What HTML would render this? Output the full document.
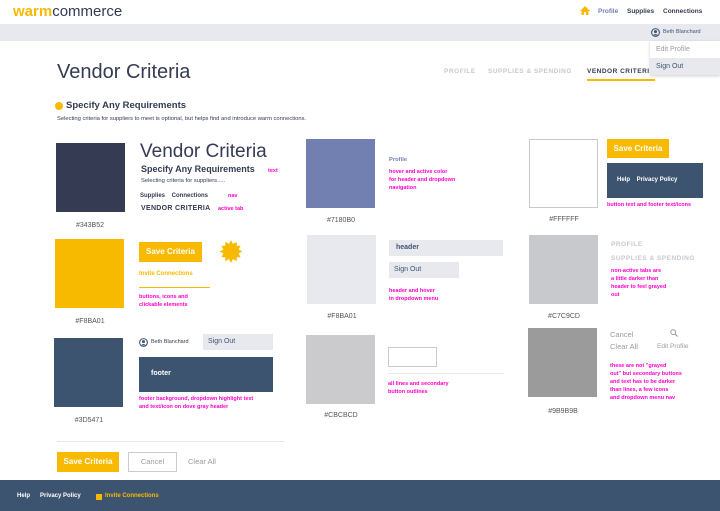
<!DOCTYPE html>
<html><head><style>
*{margin:0;padding:0;box-sizing:border-box}
body{width:720px;height:511px;position:relative;background:#fff;font-family:"Liberation Sans",sans-serif;overflow:hidden;color:#343B52}
.a{position:absolute;white-space:nowrap}
.b{font-weight:bold}
.pk{color:#ff00cc;font-weight:bold;font-size:5.5px;line-height:8px}
.lbl{font-size:7px;color:#555;width:70px;text-align:center}
.sw{position:absolute;width:69px;height:69px}
.btn{position:absolute;background:#F8BA01;color:#fff;font-size:8px;font-weight:bold;text-align:center}
</style></head><body>
<div class="a" style="left:13px;top:3px;font-size:15px;color:#343B52"><span style="color:#F8BA01;font-weight:bold">warm</span>commerce</div>
<svg class="a" style="left:580px;top:6px" width="10" height="9" viewBox="0 0 10 9"><path d="M5 0L0 5h1.5v4h2.5v-3h2v3h2.5v-4H10z" fill="#F8BA01"/></svg>
<div class="a b" style="left:598px;top:8px;font-size:6.5px;color:#7180B0">Profile</div>
<div class="a b" style="left:627px;top:8px;font-size:6.5px">Supplies</div>
<div class="a b" style="left:663px;top:8px;font-size:6.5px">Connections</div>
<div class="a" style="left:0;top:24px;width:720px;height:17px;background:#E8E9EE"></div>
<svg class="a" style="left:651px;top:28px" width="9" height="9" viewBox="0 0 10 10"><circle cx="5" cy="5" r="4.3" fill="none" stroke="#3D5471" stroke-width="1.2"/><circle cx="5" cy="4" r="1.7" fill="#3D5471"/><path d="M2 8.2Q5 5 8 8.2" fill="#3D5471"/></svg>
<div class="a" style="left:663px;top:29px;font-size:5.5px;color:#3D5471">Beth Blanchard</div>
<div class="a" style="left:650px;top:41px;width:70px;height:34px;background:#fff;box-shadow:0 1px 3px rgba(0,0,0,.2)"></div>
<div class="a" style="left:656px;top:46px;font-size:7px;color:#9B9B9B">Edit Profile</div>
<div class="a" style="left:650px;top:58px;width:70px;height:17px;background:#E8E9EE"></div>
<div class="a" style="left:656px;top:63px;font-size:7px;color:#3D5471">Sign Out</div>
<div class="a" style="left:57px;top:61px;font-size:20px;font-weight:300;color:#343B52">Vendor Criteria</div>
<div class="a b" style="left:444px;top:68px;font-size:6.5px;color:#C7C9CD;letter-spacing:.5px">PROFILE</div>
<div class="a b" style="left:488px;top:68px;font-size:6.5px;color:#C7C9CD;letter-spacing:.5px">SUPPLIES &amp; SPENDING</div>
<div class="a b" style="left:587px;top:68px;font-size:6.5px;color:#343B52;letter-spacing:.5px;width:63px;overflow:hidden">VENDOR CRITERIA</div>
<div class="a" style="left:587px;top:79px;width:68px;height:2px;background:#F8BA01"></div>
<div class="a" style="left:55px;top:102px;width:8px;height:8px;border-radius:50%;background:#F8BA01"></div>
<div class="a" style="left:66px;top:100px;font-size:9.5px;font-weight:bold">Specify Any Requirements</div>
<div class="a" style="left:57px;top:116px;font-size:5.8px;color:#343B52">Selecting criteria for suppliers to meet is optional, but helps find and introduce warm connections.</div>

<!-- col1 -->
<div class="sw" style="left:56px;top:143px;background:#343B52"></div>
<div class="a lbl" style="left:55px;top:222px">#343B52</div>
<div class="a" style="left:140px;top:141px;font-size:19px;font-weight:300">Vendor Criteria</div>
<div class="a" style="left:141px;top:164px;font-size:9px;font-weight:bold">Specify Any Requirements</div>
<div class="a" style="left:141px;top:178px;font-size:5.8px">Selecting criteria for suppliers.....</div>
<div class="a b" style="left:140px;top:193px;font-size:6px">Supplies &nbsp;&nbsp; Connections</div>
<div class="a b" style="left:141px;top:205px;font-size:7px;letter-spacing:.3px">VENDOR CRITERIA</div>
<div class="a pk" style="left:268px;top:167px">text</div>
<div class="a pk" style="left:228px;top:192px">nav</div>
<div class="a pk" style="left:218px;top:205px">active tab</div>
<div class="sw" style="left:55px;top:239px;background:#F8BA01"></div>
<div class="a lbl" style="left:55px;top:318px">#F8BA01</div>
<div class="btn" style="left:139px;top:242px;width:63px;height:20px;line-height:20px">Save Criteria</div>
<svg class="a" style="left:219px;top:240px" width="24" height="23" viewBox="0 0 24 24"><polygon fill="#F8BA01" points="12,0 14,4 18,2 18,6 22,6 20,10 24,12 20,14 22,18 18,18 18,22 14,20 12,24 10,20 6,22 6,18 2,18 4,14 0,12 4,10 2,6 6,6 6,2 10,4"/></svg>
<div class="a b" style="left:139px;top:271px;font-size:6px;color:#F8BA01">Invite Connections</div>
<div class="a" style="left:139px;top:287px;width:71px;height:1px;background:#F8BA01"></div>
<div class="a pk" style="left:139px;top:293px">buttons, icons and<br>clickable elements</div>
<div class="sw" style="left:54px;top:338px;background:#3D5471"></div>
<div class="a lbl" style="left:54px;top:417px">#3D5471</div>
<svg class="a" style="left:139px;top:338px" width="9" height="9" viewBox="0 0 10 10"><circle cx="5" cy="5" r="4.3" fill="none" stroke="#3D5471" stroke-width="1.2"/><circle cx="5" cy="4" r="1.7" fill="#3D5471"/><path d="M2 8.2Q5 5 8 8.2" fill="#3D5471"/></svg>
<div class="a" style="left:151px;top:339px;font-size:5.5px">Beth Blanchard</div>
<div class="a" style="left:203px;top:334px;width:70px;height:16px;background:#E8E9EE;font-size:7px;color:#3D5471;padding:4px 0 0 5px">Sign Out</div>
<div class="a b" style="left:139px;top:357px;width:134px;height:35px;background:#3D5471;color:#fff;font-size:7px;padding:13px 0 0 12px">footer</div>
<div class="a pk" style="left:139px;top:395px">footer background, dropdown highlight text<br>and text/icon on dove gray header</div>

<!-- col2 -->
<div class="sw" style="left:306px;top:139px;background:#7180B0"></div>
<div class="a lbl" style="left:306px;top:217px">#7180B0</div>
<div class="a b" style="left:389px;top:157px;font-size:5.8px;color:#7180B0">Profile</div>
<div class="a pk" style="left:389px;top:168px">hover and active color<br>for header and dropdown<br>navigation</div>
<div class="sw" style="left:307px;top:235px;background:#E8E9EE"></div>
<div class="a lbl" style="left:307px;top:313px">#F8BA01</div>
<div class="a b" style="left:389px;top:240px;width:114px;height:16px;background:#E8E9EE;font-size:7px;color:#3D5471;padding:4px 0 0 7px">header</div>
<div class="a" style="left:389px;top:262px;width:70px;height:16px;background:#E8E9EE;font-size:7px;color:#3D5471;padding:4px 0 0 5px">Sign Out</div>
<div class="a pk" style="left:389px;top:287px">header and hover<br>in dropdown menu</div>
<div class="sw" style="left:306px;top:335px;background:#CBCBCD"></div>
<div class="a lbl" style="left:306px;top:412px">#CBCBCD</div>
<div class="a" style="left:388px;top:347px;width:49px;height:20px;border:1px solid #CBCBCD"></div>
<div class="a" style="left:388px;top:373px;width:116px;height:1px;background:#e6e6e8"></div>
<div class="a pk" style="left:388px;top:380px">all lines and secondary<br>button outlines</div>

<!-- col3 -->
<div class="sw" style="left:529px;top:139px;border:1px solid #C7C9CD"></div>
<div class="a lbl" style="left:529px;top:216px">#FFFFFF</div>
<div class="btn" style="left:607px;top:139px;width:62px;height:19px;line-height:19px">Save Criteria</div>
<div class="a b" style="left:607px;top:163px;width:96px;height:35px;background:#3D5471;color:#fff;font-size:6px;padding:14px 0 0 10px">Help &nbsp;&nbsp;&nbsp;Privacy Policy</div>
<div class="a pk" style="left:607px;top:201px">button text and footer text/icons</div>
<div class="sw" style="left:529px;top:235px;background:#C7C9CD"></div>
<div class="a lbl" style="left:529px;top:313px">#C7C9CD</div>
<div class="a b" style="left:611px;top:241px;font-size:6.5px;color:#C7C9CD;letter-spacing:.5px">PROFILE</div>
<div class="a b" style="left:611px;top:255px;font-size:6.5px;color:#C7C9CD;letter-spacing:.5px">SUPPLIES &amp; SPENDING</div>
<div class="a pk" style="left:611px;top:267px">non-active tabs are<br>a little darker than<br>header to feel grayed<br>out</div>
<div class="sw" style="left:528px;top:328px;background:#9B9B9B"></div>
<div class="a lbl" style="left:528px;top:408px">#9B9B9B</div>
<div class="a" style="left:610px;top:330px;font-size:7.5px;color:#9B9B9B">Cancel</div>
<svg class="a" style="left:670px;top:329px" width="8" height="8" viewBox="0 0 8 8"><circle cx="3.2" cy="3.2" r="2.4" fill="none" stroke="#9B9B9B" stroke-width="1"/><path d="M5 5L7.5 7.5" stroke="#9B9B9B" stroke-width="1.2"/></svg>
<div class="a" style="left:610px;top:342px;font-size:7.5px;color:#9B9B9B">Clear All</div>
<div class="a" style="left:657px;top:343px;font-size:6.5px;color:#9B9B9B">Edit Profile</div>
<div class="a pk" style="left:610px;top:362px">these are not "grayed<br>out" but secondary buttons<br>and text has to be darker<br>than lines, a few icons<br>and dropdown menu nav</div>

<!-- bottom -->
<div class="a" style="left:57px;top:441px;width:227px;height:1px;background:#e6e6e8"></div>
<div class="btn" style="left:57px;top:452px;width:62px;height:20px;line-height:20px">Save Criteria</div>
<div class="a" style="left:128px;top:452px;width:49px;height:20px;border:1px solid #CBCBCD;font-size:7.5px;color:#9B9B9B;text-align:center;line-height:18px">Cancel</div>
<div class="a" style="left:188px;top:457px;font-size:7.5px;color:#9B9B9B">Clear All</div>
<div class="a" style="left:0;top:480px;width:720px;height:31px;background:#3D5471"></div>
<div class="a b" style="left:17px;top:493px;font-size:6px;color:#fff">Help</div>
<div class="a b" style="left:40px;top:493px;font-size:6px;color:#fff">Privacy Policy</div>
<div class="a" style="left:96px;top:494px;width:6px;height:6px;background:#F8BA01"></div>
<div class="a b" style="left:105px;top:493px;font-size:6px;color:#F8BA01">Invite Connections</div>
</body></html>
